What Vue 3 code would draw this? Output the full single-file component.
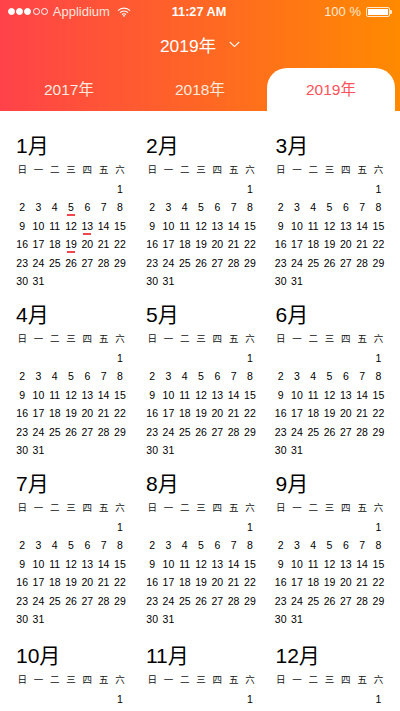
<script setup>
const years = ['2017年', '2018年', '2019年']
const weekdays = ['日', '一', '二', '三', '四', '五', '六']
const blanks = 6

// every month is drawn with the same 31 day layout
const days = Array.from({ length: 31 }, (_, i) => i + 1)
const months = Array.from({ length: 12 }, (_, i) => ({
  name: `${i + 1}月`,
  marked: i === 0 ? [5, 13, 19] : []
}))
</script>

<template>
  <div class="page">
    <header class="header">
      <div class="status">
        <div class="status-left">
          <span class="dots">
            <i v-for="n in 5" :key="n" class="dot" :class="{ empty: n > 3 }"></i>
          </span>
          <span class="carrier">Applidium</span>
          <svg class="wifi" width="14" height="10" viewBox="0 0 14 10">
            <path d="M1 3.6a8.5 8.5 0 0 1 12 0M3 5.7a5.6 5.6 0 0 1 8 0M5 7.6a2.8 2.8 0 0 1 4 0" fill="none" stroke="#fff" stroke-width="1.2" />
            <path d="M7 10 5.8 8.7a1.7 1.7 0 0 1 2.4 0z" fill="#fff" />
          </svg>
        </div>
        <div class="time">11:27 AM</div>
        <div class="status-right">
          <span>100 %</span>
          <span class="battery"><i></i></span>
        </div>
      </div>
      <div class="title">
        <span>2019年</span>
        <svg width="11" height="7" viewBox="0 0 11 7">
          <path d="M.8 1 5.5 5.6 10.2 1" fill="none" stroke="#fff" stroke-width="1.1" />
        </svg>
      </div>
      <div class="tabs">
        <div v-for="(year, index) in years" :key="year" class="tab" :class="{ active: index === 2 }">{{ year }}</div>
      </div>
    </header>

    <main class="calendar">
      <section v-for="month in months" :key="month.name" class="month">
        <h2 class="month-name">{{ month.name }}</h2>
        <div class="grid weeks">
          <span v-for="day in weekdays" :key="day">{{ day }}</span>
        </div>
        <div class="grid dates">
          <span v-for="n in blanks" :key="'b' + n"></span>
          <span v-for="day in days" :key="day" class="date" :class="{ marked: month.marked.includes(day) }">{{ day }}</span>
        </div>
      </section>
    </main>
  </div>
</template>

<style>
html, body {
  margin: 0;
  background: #fff;
}
</style>

<style scoped>
.page {
  width: 400px;
  height: 711px;
  overflow: hidden;
  font-family: "Liberation Sans", "Noto Sans CJK SC", sans-serif;
  color: #111;
}

.header {
  height: 111px;
  background: linear-gradient(90deg, #ff4249, #ff8a00);
  color: #fff;
  display: flex;
  flex-direction: column;
}

.status {
  height: 23px;
  padding: 0 10px 0 8px;
  display: grid;
  grid-template-columns: 1fr auto 1fr;
  align-items: center;
  font-size: 13px;
}

.status-left,
.status-right {
  display: flex;
  align-items: center;
}

.status-right {
  justify-content: flex-end;
  gap: 5px;
  color: #ffe9d2;
}

.dots {
  display: flex;
  gap: 1.2px;
  margin-right: 5px;
}

.dot {
  width: 5px;
  height: 5px;
  border: 0.5px solid #fff;
  border-radius: 50%;
  background: #fff;
}

.dot.empty {
  background: transparent;
}

.carrier {
  color: #ffe3dc;
  margin-right: 7px;
}

.time {
  font-weight: 700;
  font-size: 12.7px;
}

.battery {
  position: relative;
  width: 24px;
  height: 10px;
  border: 1px solid #ffe9d2;
  border-radius: 2px;
  padding: 1px;
  box-sizing: border-box;
  display: flex;
}

.battery i {
  flex: 1;
  background: #fff;
}

.battery::after {
  content: "";
  position: absolute;
  right: -3px;
  top: 2px;
  width: 2px;
  height: 4px;
  background: #ffe9d2;
  border-radius: 0 1px 1px 0;
}

.title {
  height: 45px;
  padding-bottom: 2px;
  box-sizing: border-box;
  display: flex;
  align-items: center;
  justify-content: center;
  gap: 13px;
  font-size: 17.4px;
}

.tabs {
  flex: 1;
  display: grid;
  grid-template-columns: 128px 134px 128px;
  padding-left: 5px;
  font-size: 15.5px;
}

.tab {
  display: flex;
  align-items: center;
  justify-content: center;
  padding-bottom: 4px;
  color: #ffeadf;
}

.tab.active {
  background: #fff;
  color: #ff525a;
  border-radius: 20px 20px 0 0;
}

.calendar {
  display: grid;
  grid-template-columns: 130px 128.5px 130px;
  grid-auto-rows: 169px;
  padding: 20px 0 0 14px;
}

/* last row sits a little lower in the reference */
.month:nth-child(n + 10) {
  padding-top: 2.5px;
}

.month-name {
  margin: 0 0 4px 2px;
  height: 29px;
  line-height: 29px;
  font-size: 21px;
  font-weight: 400;
  color: #000;
}

.month:nth-child(3n) .month-name {
  margin-left: 3px;
}

.grid {
  display: grid;
  grid-template-columns: repeat(7, 16.3px);
  justify-items: center;
}

.weeks {
  font-size: 9.5px;
  line-height: 12px;
  height: 12px;
  color: #111;
  margin-bottom: 4px;
}

.dates {
  grid-auto-rows: 18.4px;
  font-size: 10.5px;
  line-height: 18px;
  color: #000;
}

.date {
  position: relative;
}

.date.marked::after {
  content: "";
  position: absolute;
  left: 50%;
  bottom: 0.5px;
  width: 8px;
  height: 2px;
  margin-left: -4px;
  background: #f4454c;
}
</style>
